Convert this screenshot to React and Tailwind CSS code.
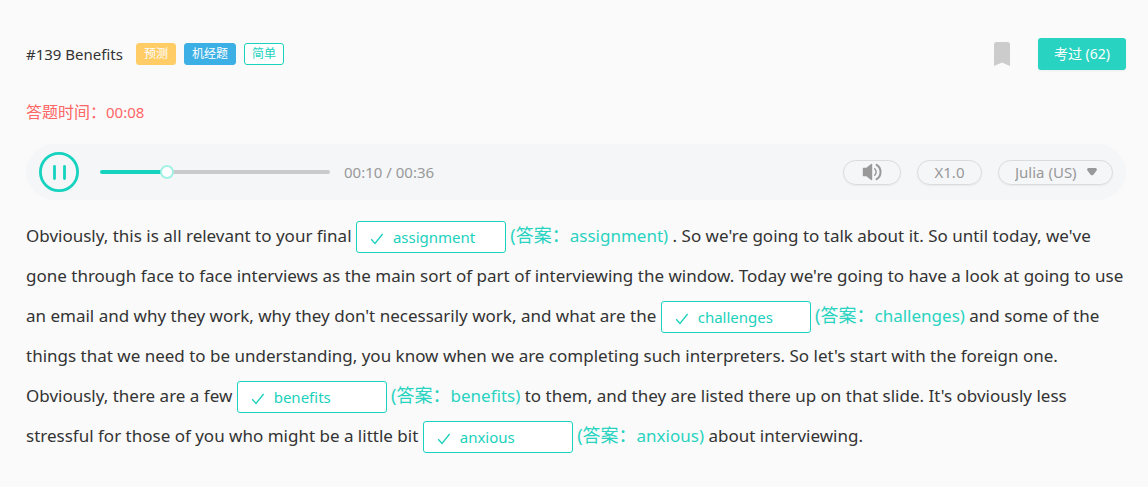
import { useState } from "react";

function Tag({ className, children }) {
  return (
    <span className={`flex h-[22px] items-center rounded-[3px] border px-[7px] text-xs ${className}`}>
      {children}
    </span>
  );
}

function Blank({ answer }) {
  const [value, setValue] = useState(answer);
  return (
    <>
      <label className="relative inline-block h-8 w-[150px] align-middle leading-none">
        <input
          aria-label="填空"
          value={value}
          onChange={(event) => setValue(event.target.value)}
          className="h-8 w-full rounded-[3px] border border-[#1ad1bd] bg-white pr-2 pl-9 text-[15px] text-[#1ad1bd] outline-none"
        />
        <svg
          viewBox="0 0 14 12"
          className="absolute top-3 left-[14px] h-3 w-[14px]"
          fill="none"
          stroke="#1ad1bd"
          strokeWidth="1.3"
        >
          <path d="M1.2 6.2 5 10.4 12.6 1" />
        </svg>
      </label>{" "}
      <span className="text-[#29d3c1]">
        <span className="text-lg/8">(答案：</span>
        {answer})
      </span>
    </>
  );
}

function Player() {
  const duration = 36;
  const [time, setTime] = useState(10);
  const clock = (s) => `00:${String(s).padStart(2, "0")}`;
  const percent = (time / duration) * 100;
  return (
    <section className="mt-[18px] flex h-14 items-center rounded-full bg-[#f4f6f8] px-[13px] text-[15px] text-[#999]">
      <button aria-label="暂停" className="h-10 w-10 shrink-0">
        <svg viewBox="0 0 40 40" className="h-10 w-10" fill="none" stroke="#15d3bf" strokeLinecap="round">
          <circle cx="20" cy="20" r="18.6" strokeWidth="2.8" />
          <path d="M15.5 14.5v12M25.5 14.5v12" strokeWidth="2.8" />
        </svg>
      </button>
      <input
        type="range"
        aria-label="播放进度"
        min="0"
        max={duration}
        value={time}
        onChange={(event) => setTime(Number(event.target.value))}
        style={{
          backgroundImage: `linear-gradient(to right, #15d3bf ${percent}%, #c9cacc ${percent}%)`,
        }}
        className="ml-[21px] h-1 w-[230px] appearance-none rounded-full [&::-webkit-slider-thumb]:h-[14px] [&::-webkit-slider-thumb]:w-[14px] [&::-webkit-slider-thumb]:appearance-none [&::-webkit-slider-thumb]:rounded-full [&::-webkit-slider-thumb]:border-2 [&::-webkit-slider-thumb]:border-[#a2f1e5] [&::-webkit-slider-thumb]:bg-white"
      />
      <span className="ml-[14px]">
        {clock(time)} / {clock(duration)}
      </span>
      <div className="ml-auto flex items-center gap-4">
        <button
          aria-label="音量"
          className="flex h-[25px] w-[58px] items-center justify-center rounded-full border border-[#dadbdd] shadow-xs"
        >
          <svg viewBox="0 0 20 18" className="h-[18px] w-5" fill="none" stroke="#999" strokeLinecap="round">
            <path d="M1.5 5.5h3l5-4v15l-5-4h-3z" fill="#999" strokeLinejoin="round" strokeWidth="1.4" />
            <path d="M12.7 5.8c1.9 1.7 1.9 4.7 0 6.4" strokeWidth="1.5" />
            <path d="M14.6 1.8c5.2 3.2 5.2 11.2 0 14.4" strokeWidth="2" />
          </svg>
        </button>
        <button className="flex h-[25px] w-[65px] items-center justify-center rounded-full border border-[#dadbdd] shadow-xs">
          X1.0
        </button>
        <label className="relative flex">
          <select
            aria-label="发音人"
            className="h-[25px] w-[115px] appearance-none rounded-full border border-[#dadbdd] bg-transparent pl-4 shadow-xs outline-none"
          >
            <option>Julia (US)</option>
          </select>
          <svg viewBox="0 0 10 8" className="pointer-events-none absolute top-2 right-4 h-2 w-[10px]" fill="#999">
            <path d="M1.4 0h7.2C10 .2 10.2 1.7 9.4 2.7L6.6 6.6Q5 8.2 3.4 6.600L.6 2.700C-.2 1.700 0 .2 1.400 0Z" />
          </svg>
        </label>
      </div>
    </section>
  );
}

export default function App() {
  return (
    <main className="min-h-screen bg-[#fafafa] pt-[38px] pr-[22px] pb-7 pl-[26px] font-['Noto_Sans','Noto_Sans_CJK_SC',sans-serif] text-[#333]">
      <header className="flex h-8 items-center">
        <h1 className="text-[15px]">#139 Benefits</h1>
        <div className="ml-[13px] flex gap-2">
          <Tag className="border-[#ffcc66] bg-[#ffcc66] text-white">预测</Tag>
          <Tag className="border-[#3cb0e5] bg-[#3cb0e5] text-white">机经题</Tag>
          <Tag className="border-[#1ad1bd] bg-white text-[#1ad1bd]">简单</Tag>
        </div>
        <button aria-label="收藏" className="ml-auto">
          <svg viewBox="0 0 16 24" className="h-6 w-4" fill="#ccc">
            <path d="M2.500 0h11Q16 0 16 2.500V24L8 20.500 0 24V2.500Q0 0 2.500 0Z" />
          </svg>
        </button>
        <button className="ml-7 h-8 w-[88px] rounded-[3px] bg-[#29d3c1] text-sm text-white shadow-xs">
          考过 (62)
        </button>
      </header>
      <p className="mt-7 text-base/7 text-[#ff6666]">
        答题时间：<span className="text-[15px]">00:08</span>
      </p>
      <Player />
      <p className="mt-4 text-[17px]/10">
        Obviously, this is all relevant to your final <Blank answer="assignment" /> . So we're going to talk
        about it. So until today, we've gone through face to face interviews as the main sort of part of
        interviewing the window. Today we're going to have a look at going to use an email and why they work,
        why they don't necessarily work, and what are the <Blank answer="challenges" /> and some of the things
        that we need to be understanding, you know when we are completing such interpreters. So let's start
        with the foreign one. Obviously, there are a few <Blank answer="benefits" /> to them, and they are
        listed there up on that slide. It's obviously less stressful for those of you who might be a little
        bit <Blank answer="anxious" /> about interviewing.
      </p>
    </main>
  );
}
